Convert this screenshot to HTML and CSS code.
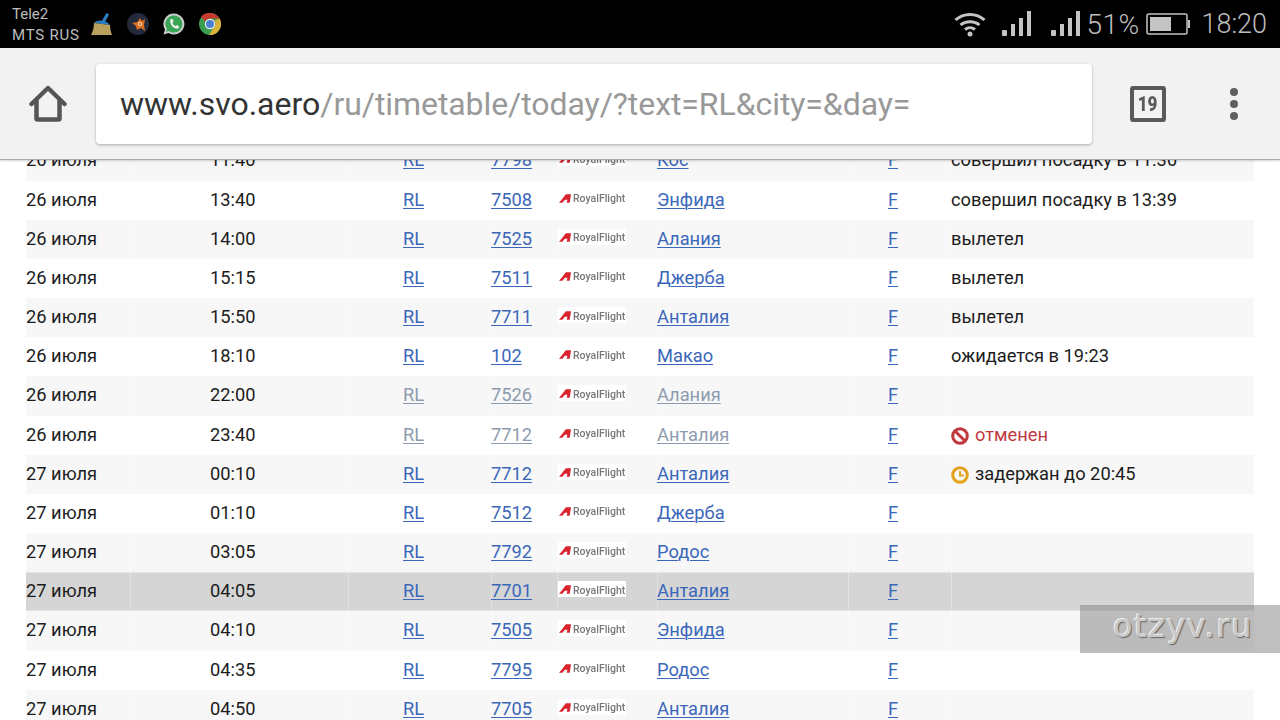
FILE: index.html
```html
<!DOCTYPE html>
<html lang="ru">
<head>
<meta charset="utf-8">
<title>svo.aero</title>
<link rel="stylesheet" href="styles.css">
</head>
<body>
<svg class="defs" width="0" height="0" aria-hidden="true">
  <symbol id="wing" viewBox="0 0 14 10">
    <path d="M0 10 L3 6.500 L8 0 L14 0 L12.500 10 L9 10 L9.800 6.500 L6.800 6.500 L4 10 Z" fill="#d9232e"/>
  </symbol>
</svg>
<header class="status">
  <div class="carriers"><span>Tele2</span><span class="wide">MTS RUS</span></div>
  <div class="apps">
    <svg class="app" width="22" height="24" viewBox="0 0 22 24"><path d="M15.500 1 L18 2.500 L14 10 L11 8.500 Z" fill="#2a7fc0"/><path d="M3 11 C5 8 14 7 19 13 Z" fill="#2a7fc0"/><path d="M3 11 L19 13 C19 17 20 20 21 23 L0 23 C2 19 3 15 3 11 Z" fill="#b9a05c"/></svg>
    <svg class="app" width="22" height="22" viewBox="0 0 22 22"><circle cx="11" cy="11" r="11" fill="#24293b"/><path d="M5 10 L10.500 9 L13 5 L15 8 L18 6 L17 12 L18 18 L14 15 L10 17 L9 13 Z" fill="#d9701f"/><circle cx="13" cy="11" r="1.800" fill="none" stroke="#f0d8c0" stroke-width="1"/></svg>
    <svg class="app" width="22" height="22" viewBox="0 0 22 22"><path d="M11 0.500 A10.500 10.500 0 1 1 5.500 20 L0.500 21.500 L2 16.500 A10.500 10.500 0 0 1 11 0.500 Z" fill="#ccc"/><path d="M11 2.500 A8.500 8.500 0 1 1 6 18 L3 19 L4 16 A8.500 8.500 0 0 1 11 2.500 Z" fill="#3aa655"/><path d="M7.500 6 L9.500 6 L10.500 8.500 L9.500 10 C10 11.500 11 12.500 12.500 13 L14 12 L16 13.500 L15.500 15.500 C11 16.500 6 11.500 7.500 6 Z" fill="#f2f2f2"/></svg>
    <svg class="app" width="22" height="22" viewBox="0 0 22 22"><circle cx="11" cy="11" r="11" fill="#3b9c50"/><path d="M11 0 A11 11 0 0 1 20.500 5.500 L11 5.500 A5.500 5.500 0 0 0 6 8.500 L2 3.500 A11 11 0 0 1 11 0 Z" fill="#c8392e"/><path d="M20.500 5.500 A11 11 0 0 1 10 22 L15 14 A5.500 5.500 0 0 0 15.500 7.500 Z" fill="#d9b13b"/><circle cx="11" cy="11" r="5.200" fill="#eee"/><circle cx="11" cy="11" r="4" fill="#4a7fd0"/></svg>
  </div>
  <div class="indicators">
    <svg class="wifi" width="32" height="26" viewBox="0 0 32 26" fill="none" stroke="#c4c4c4" stroke-width="3"><path d="M1.500 9 C9.500 1.500 22.500 1.500 30.500 9"/><path d="M6.500 14 C11.500 9.500 20.500 9.500 25.500 14"/><path d="M11 18.500 C14 16 18 16 21 18.500"/><circle cx="16" cy="23" r="2.500" fill="#c4c4c4" stroke="none"/></svg>
    <svg class="sig1" width="30" height="25" viewBox="0 0 30 25" fill="#c4c4c4"><rect x="0" y="19" width="5" height="6" rx="1"/><rect x="9" y="13" width="4" height="12"/><rect x="17" y="7" width="4" height="18"/><rect x="25" y="0" width="4" height="25"/></svg>
    <svg class="sig2" width="30" height="25" viewBox="0 0 30 25" fill="#c4c4c4"><rect x="0" y="19" width="5" height="6" rx="1"/><rect x="9" y="13" width="4" height="12"/><rect x="17" y="7" width="4" height="18"/><rect x="25" y="0" width="4" height="25"/></svg>
    <span class="pct">51%</span>
    <svg class="batt" width="44" height="22" viewBox="0 0 44 22"><rect x="1" y="1" width="40" height="20" rx="2" fill="none" stroke="#c4c4c4" stroke-width="1.500"/><rect x="4" y="4" width="21" height="14" fill="#c4c4c4"/><rect x="42" y="7" width="2" height="8" fill="#c4c4c4"/></svg>
    <span class="clock">18:20</span>
  </div>
</header>

<nav class="toolbar">
  <svg class="home" width="38" height="38" viewBox="0 0 38 38" fill="none" stroke="#555" stroke-width="4.500" stroke-linejoin="round" stroke-linecap="round"><path d="M2.500 19 L19 3 L35.500 19"/><path d="M7.500 16 V33.500 A1 1 0 0 0 8.500 34.500 H29.500 A1 1 0 0 0 30.500 33.500 V16"/></svg>
  <div class="omnibox"><span class="host">www.svo.aero</span><span class="path">/ru/timetable/today/?text=RL&amp;city=&amp;day=</span></div>
  <div class="tabs"><span class="count">19</span></div>
  <div class="menu"><i></i><i></i><i></i></div>
</nav>

<main class="viewport">
  <div class="board">
    <div class="row alt"><span class="c date">26 июля</span><span class="c time">11:40</span><span class="c air"><a href="#">RL</a></span><span class="c num"><a href="#">7798</a></span><span class="c logo"><span class="brand"><svg width="12" height="9"><use href="#wing"/></svg><b>RoyalFlight</b></span></span><span class="c city"><a href="#">Кос</a></span><span class="c term"><a href="#">F</a></span><span class="c info">совершил посадку в 11:36</span></div>
    <div class="row"><span class="c date">26 июля</span><span class="c time">13:40</span><span class="c air"><a href="#">RL</a></span><span class="c num"><a href="#">7508</a></span><span class="c logo"><span class="brand"><svg width="12" height="9"><use href="#wing"/></svg><b>RoyalFlight</b></span></span><span class="c city"><a href="#">Энфида</a></span><span class="c term"><a href="#">F</a></span><span class="c info">совершил посадку в 13:39</span></div>
    <div class="row alt"><span class="c date">26 июля</span><span class="c time">14:00</span><span class="c air"><a href="#">RL</a></span><span class="c num"><a href="#">7525</a></span><span class="c logo"><span class="brand"><svg width="12" height="9"><use href="#wing"/></svg><b>RoyalFlight</b></span></span><span class="c city"><a href="#">Алания</a></span><span class="c term"><a href="#">F</a></span><span class="c info">вылетел</span></div>
    <div class="row"><span class="c date">26 июля</span><span class="c time">15:15</span><span class="c air"><a href="#">RL</a></span><span class="c num"><a href="#">7511</a></span><span class="c logo"><span class="brand"><svg width="12" height="9"><use href="#wing"/></svg><b>RoyalFlight</b></span></span><span class="c city"><a href="#">Джерба</a></span><span class="c term"><a href="#">F</a></span><span class="c info">вылетел</span></div>
    <div class="row alt"><span class="c date">26 июля</span><span class="c time">15:50</span><span class="c air"><a href="#">RL</a></span><span class="c num"><a href="#">7711</a></span><span class="c logo"><span class="brand"><svg width="12" height="9"><use href="#wing"/></svg><b>RoyalFlight</b></span></span><span class="c city"><a href="#">Анталия</a></span><span class="c term"><a href="#">F</a></span><span class="c info">вылетел</span></div>
    <div class="row"><span class="c date">26 июля</span><span class="c time">18:10</span><span class="c air"><a href="#">RL</a></span><span class="c num"><a href="#">102</a></span><span class="c logo"><span class="brand"><svg width="12" height="9"><use href="#wing"/></svg><b>RoyalFlight</b></span></span><span class="c city"><a href="#">Макао</a></span><span class="c term"><a href="#">F</a></span><span class="c info">ожидается в 19:23</span></div>
    <div class="row alt off"><span class="c date">26 июля</span><span class="c time">22:00</span><span class="c air"><a href="#">RL</a></span><span class="c num"><a href="#">7526</a></span><span class="c logo"><span class="brand"><svg width="12" height="9"><use href="#wing"/></svg><b>RoyalFlight</b></span></span><span class="c city"><a href="#">Алания</a></span><span class="c term"><a href="#">F</a></span><span class="c info"></span></div>
    <div class="row off"><span class="c date">26 июля</span><span class="c time">23:40</span><span class="c air"><a href="#">RL</a></span><span class="c num"><a href="#">7712</a></span><span class="c logo"><span class="brand"><svg width="12" height="9"><use href="#wing"/></svg><b>RoyalFlight</b></span></span><span class="c city"><a href="#">Анталия</a></span><span class="c term"><a href="#">F</a></span><span class="c info cancel"><svg class="mark" width="18" height="18" viewBox="0 0 18 18" fill="none" stroke="#c0393f" stroke-width="3"><circle cx="9" cy="9" r="7.300"/><path d="M4 4 L14 14"/></svg>отменен</span></div>
    <div class="row alt"><span class="c date">27 июля</span><span class="c time">00:10</span><span class="c air"><a href="#">RL</a></span><span class="c num"><a href="#">7712</a></span><span class="c logo"><span class="brand"><svg width="12" height="9"><use href="#wing"/></svg><b>RoyalFlight</b></span></span><span class="c city"><a href="#">Анталия</a></span><span class="c term"><a href="#">F</a></span><span class="c info"><svg class="mark" width="18" height="18" viewBox="0 0 18 18" fill="none" stroke="#e2a21c" stroke-width="3"><circle cx="9" cy="9" r="7.300"/><path d="M9 5 V9.500 H13" stroke-width="2"/></svg>задержан до 20:45</span></div>
    <div class="row"><span class="c date">27 июля</span><span class="c time">01:10</span><span class="c air"><a href="#">RL</a></span><span class="c num"><a href="#">7512</a></span><span class="c logo"><span class="brand"><svg width="12" height="9"><use href="#wing"/></svg><b>RoyalFlight</b></span></span><span class="c city"><a href="#">Джерба</a></span><span class="c term"><a href="#">F</a></span><span class="c info"></span></div>
    <div class="row alt"><span class="c date">27 июля</span><span class="c time">03:05</span><span class="c air"><a href="#">RL</a></span><span class="c num"><a href="#">7792</a></span><span class="c logo"><span class="brand"><svg width="12" height="9"><use href="#wing"/></svg><b>RoyalFlight</b></span></span><span class="c city"><a href="#">Родос</a></span><span class="c term"><a href="#">F</a></span><span class="c info"></span></div>
    <div class="row hot"><span class="c date">27 июля</span><span class="c time">04:05</span><span class="c air"><a href="#">RL</a></span><span class="c num"><a href="#">7701</a></span><span class="c logo"><span class="brand"><svg width="12" height="9"><use href="#wing"/></svg><b>RoyalFlight</b></span></span><span class="c city"><a href="#">Анталия</a></span><span class="c term"><a href="#">F</a></span><span class="c info"></span></div>
    <div class="row alt"><span class="c date">27 июля</span><span class="c time">04:10</span><span class="c air"><a href="#">RL</a></span><span class="c num"><a href="#">7505</a></span><span class="c logo"><span class="brand"><svg width="12" height="9"><use href="#wing"/></svg><b>RoyalFlight</b></span></span><span class="c city"><a href="#">Энфида</a></span><span class="c term"><a href="#">F</a></span><span class="c info"></span></div>
    <div class="row"><span class="c date">27 июля</span><span class="c time">04:35</span><span class="c air"><a href="#">RL</a></span><span class="c num"><a href="#">7795</a></span><span class="c logo"><span class="brand"><svg width="12" height="9"><use href="#wing"/></svg><b>RoyalFlight</b></span></span><span class="c city"><a href="#">Родос</a></span><span class="c term"><a href="#">F</a></span><span class="c info"></span></div>
    <div class="row alt"><span class="c date">27 июля</span><span class="c time">04:50</span><span class="c air"><a href="#">RL</a></span><span class="c num"><a href="#">7705</a></span><span class="c logo"><span class="brand"><svg width="12" height="9"><use href="#wing"/></svg><b>RoyalFlight</b></span></span><span class="c city"><a href="#">Анталия</a></span><span class="c term"><a href="#">F</a></span><span class="c info"></span></div>
  </div>
  <div class="stamp">otzyv.ru</div>
</main>
</body>
</html>
```

FILE: styles.css
```css
* { box-sizing: border-box; }
html, body { margin: 0; height: 720px; overflow: hidden; background: #fff; }
body { font-family: Roboto, "Liberation Sans", sans-serif; color: #1c1c1c; }
.defs { position: absolute; }

/* status bar */
.status { height: 48px; background: #000; display: flex; align-items: center; padding-left: 12px; color: #bdbdbd; }
.carriers { width: 79px; display: flex; flex-direction: column; font-size: 15px; line-height: 21px; padding-top: 1px; white-space: nowrap; }
.wide { letter-spacing: 0.8px; }
.apps { display: flex; align-items: center; gap: 14px; }
.app { display: block; }
.indicators { margin-left: auto; display: flex; align-items: center; padding-right: 13px; }
.wifi { margin-right: 16px; margin-top: -1px; }
.sig1 { margin-right: 19px; margin-top: -2px; }
.sig2 { margin-right: 5px; margin-top: -2px; }
.pct { font-size: 28px; width: 51px; white-space: nowrap; font-weight: 300; letter-spacing: 0.5px; }
.batt { margin-left: 9px; }
.clock { font-size: 27px; margin-left: 11px; font-weight: 300; }

/* browser toolbar */
.toolbar { position: relative; z-index: 2; height: 112px; background: #f2f2f2; display: flex; align-items: center; padding: 1px 0 0 29px; border-bottom: 1px solid #a9a9a9; box-shadow: 0 1px 2px rgba(0,0,0,.18); }
.home { margin-right: 29px; }
.omnibox { width: 996px; height: 80px; background: #fff; border-radius: 4px; box-shadow: 0 1px 3px rgba(0,0,0,.3); display: flex; align-items: center; padding-left: 24px; font-size: 32px; white-space: nowrap; }
.host { color: #333; }
.path { color: #999; letter-spacing: -0.07px; }
.tabs { width: 36px; height: 36px; margin-left: 38px; border: 4px solid #5a5a5a; border-radius: 3px; display: flex; align-items: center; justify-content: center; font-weight: 900; font-size: 20px; color: #5a5a5a; }
.count { display: inline-block; transform: scaleX(.85); }
.menu { margin-left: 64px; display: flex; flex-direction: column; gap: 4px; }
.menu i { display: block; width: 8px; height: 8px; border-radius: 50%; background: #5f5f5f; }

/* flights */
.viewport { position: relative; height: 560px; overflow: hidden; }
.board { margin: -18.67px 26px 0; }
.row { display: grid; grid-template-columns: 104px 218px 143px 66px 100px 191px 103px 303px; height: 39.18px; align-items: stretch; font-size: 18.3px; background: #fff; }
.row.alt { background: #f7f7f7; }
.row.hot { background: #d5d5d5; box-shadow: inset 0 1px 0 #e4e4e4, inset 0 -1px 0 #e4e4e4; }
.c { display: flex; align-items: center; white-space: nowrap; box-shadow: inset 1px 0 0 rgba(255,255,255,.3); padding-bottom: 2.04px; }
.date { box-shadow: none; }
.time { padding-left: 80px; }
.air { padding-left: 55px; }
.logo { align-items: flex-start; padding-top: 9px; }
.term { padding-left: 40px; }
a { color: #3b67ba; text-decoration: underline; text-underline-offset: 2px; text-decoration-thickness: 1px; }
.off .air a, .off .num a, .off .city a { color: #8d9bb0; }
.brand { display: flex; align-items: center; gap: 2px; width: 68px; height: 16px; margin-left: 1px; padding: 2px 0 0 1px; background: #fff; filter: blur(.35px); }
.brand svg { display: block; margin-top: -1px; }
.brand b { font-size: 10.5px; font-weight: 500; color: #777; }
.cancel { color: #c0393f; }
.mark { margin-right: 6px; margin-top: 3px; flex: none; }

/* watermark */
.stamp { position: absolute; left: 1080px; top: 445px; width: 200px; height: 48px; background: rgba(128,128,128,.5); padding-left: 33px; font: 32px/42px "DejaVu Sans", sans-serif; color: #c8c8c8; letter-spacing: 1.5px; text-shadow: -1px -1px 0 #eee, 1px 1px 1px #666; white-space: nowrap; }
```
